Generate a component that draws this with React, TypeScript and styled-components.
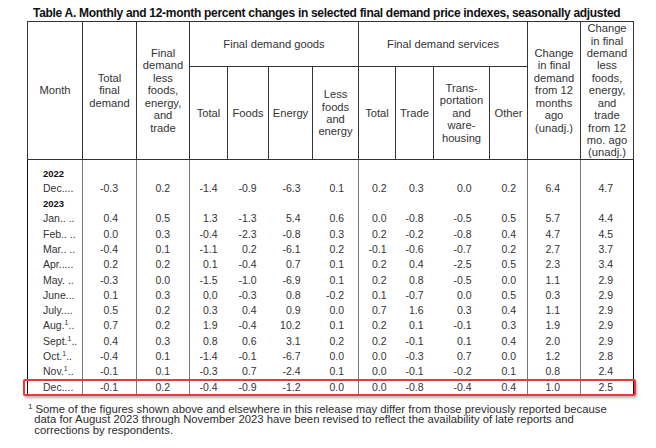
import React from 'react'
import styled, { createGlobalStyle } from 'styled-components';

const GlobalStyle = createGlobalStyle`
    html, body {
        margin: 0;
        padding: 0;
        background-color: #FFF;
    }
    body {
        font-family: "Liberation Sans", Arial, sans-serif;
        color: #2b2b2b;
    }
`;

const Page = styled.div`
    width: 656px;
    height: 448px;
    box-sizing: border-box;
    padding: 6px 0 0 27px;
    overflow: hidden;
`;

const Title = styled.h1`
    margin: 0 0 1px 6px;
    font-size: 12px;
    line-height: 14px;
    font-weight: 700;
    letter-spacing: -0.3px;
    color: #111;
    white-space: nowrap;
`;

const TableWrap = styled.div`
    position: relative;
    width: 607px;
`;

const Table = styled.table`
    border-collapse: collapse;
    table-layout: fixed;
    width: 607px;
    border-top: 1px solid #111;
    border-left: 1px solid #111;
    border-right: 1px solid #111;
    border-bottom: 1px solid #888;
`;

const HeadCell = styled.th<{ $h?: number }>`
    border: 1px solid #333;
    padding: 0;
    font-size: 11.2px;
    line-height: 12.4px;
    font-weight: 400;
    text-align: center;
    vertical-align: middle;
    color: #333;
    height: ${p => (p.$h ? `${p.$h}px` : 'auto')};
`;

const Row = styled.tr`
    height: 15.3px;
`;

const Spacer = styled.tr`
    height: 6px;
    td {
        padding: 0;
    }
`;

const Cell = styled.td<{ $pad: number; $divider?: boolean }>`
    padding: 0 ${p => p.$pad}px 0 0;
    font-size: 10.5px;
    line-height: 15.3px;
    text-align: right;
    white-space: nowrap;
    color: #333;
    border-left: ${p => (p.$divider ? '1px solid #777' : '0')};
`;

const MonthCell = styled.td<{ $year?: boolean }>`
    padding: 0 0 0 15px;
    font-size: ${p => (p.$year ? '9.5px' : '10.5px')};
    font-weight: ${p => (p.$year ? 700 : 400)};
    line-height: 15.3px;
    white-space: nowrap;
    overflow: hidden;
    color: ${p => (p.$year ? '#111' : '#333')};
`;

const Sup = styled.sup`
    font-size: 7px;
    line-height: 0;
    vertical-align: 4px;
`;

const Highlight = styled.div`
    position: absolute;
    left: -4px;
    right: -2px;
    bottom: 0;
    height: 17px;
    box-sizing: border-box;
    border: 2px solid #e8393f;
    border-radius: 2px;
    box-shadow: 1px 2px 3px rgba(0, 0, 0, 0.3);
    pointer-events: none;
`;

const Footnote = styled.p`
    margin: 8px 0 0 1px;
    font-size: 11.3px;
    line-height: 10.5px;
    color: #2b2b2b;
    white-space: nowrap;
`;

const FootSup = styled.sup`
    font-size: 8px;
    line-height: 0;
    vertical-align: 4px;
    margin-right: 3px;
`;

// widths and right padding for each column (month first)
const cols = [
    { w: 55, pad: 0, divider: false },
    { w: 54, pad: 18, divider: true },
    { w: 53, pad: 19, divider: true },
    { w: 38, pad: 10, divider: true },
    { w: 41, pad: 12, divider: false },
    { w: 44, pad: 12, divider: false },
    { w: 46, pad: 14, divider: false },
    { w: 37, pad: 9, divider: true },
    { w: 38, pad: 10, divider: false },
    { w: 56, pad: 18, divider: false },
    { w: 38, pad: 11, divider: false },
    { w: 53, pad: 20, divider: true },
    { w: 53, pad: 20, divider: true },
];

type DataRow = { year: string } | { month: React.ReactNode; values: string[] };

const note = <Sup>1</Sup>;

const rows: DataRow[] = [
    { year: '2022' },
    { month: 'Dec....', values: ['-0.3', '0.2', '-1.4', '-0.9', '-6.3', '0.1', '0.2', '0.3', '0.0', '0.2', '6.4', '4.7'] },
    { year: '2023' },
    { month: 'Jan.. ..', values: ['0.4', '0.5', '1.3', '-1.3', '5.4', '0.6', '0.0', '-0.8', '-0.5', '0.5', '5.7', '4.4'] },
    { month: 'Feb.. ..', values: ['0.0', '0.3', '-0.4', '-2.3', '-0.8', '0.3', '0.2', '-0.2', '-0.8', '0.4', '4.7', '4.5'] },
    { month: 'Mar.. ..', values: ['-0.4', '0.1', '-1.1', '0.2', '-6.1', '0.2', '-0.1', '-0.6', '-0.7', '0.2', '2.7', '3.7'] },
    { month: 'Apr.....', values: ['0.2', '0.2', '0.1', '-0.4', '0.7', '0.1', '0.2', '0.4', '-2.5', '0.5', '2.3', '3.4'] },
    { month: 'May. ..', values: ['-0.3', '0.0', '-1.5', '-1.0', '-6.9', '0.1', '0.2', '0.8', '-0.5', '0.0', '1.1', '2.9'] },
    { month: 'June...', values: ['0.1', '0.3', '0.0', '-0.3', '0.8', '-0.2', '0.1', '-0.7', '0.0', '0.5', '0.3', '2.9'] },
    { month: 'July....', values: ['0.5', '0.2', '0.3', '0.4', '0.9', '0.0', '0.7', '1.6', '0.3', '0.4', '1.1', '2.9'] },
    { month: <>Aug.{note}..</>, values: ['0.7', '0.2', '1.9', '-0.4', '10.2', '0.1', '0.2', '0.1', '-0.1', '0.3', '1.9', '2.9'] },
    { month: <>Sept.{note}..</>, values: ['0.4', '0.3', '0.8', '0.6', '3.1', '0.2', '0.2', '-0.1', '0.1', '0.4', '2.0', '2.9'] },
    { month: <>Oct.{note}..</>, values: ['-0.4', '0.1', '-1.4', '-0.1', '-6.7', '0.0', '0.0', '-0.3', '0.7', '0.0', '1.2', '2.8'] },
    { month: <>Nov.{note}..</>, values: ['-0.1', '0.1', '-0.3', '0.7', '-2.4', '0.1', '0.0', '-0.1', '-0.2', '0.1', '0.8', '2.4'] },
    { month: 'Dec....', values: ['-0.1', '0.2', '-0.4', '-0.9', '-1.2', '0.0', '0.0', '-0.8', '-0.4', '0.4', '1.0', '2.5'] },
];

const App = () => {
  return (
    <>
      <GlobalStyle />
      <Page>
        <Title>Table A. Monthly and 12-month percent changes in selected final demand price indexes, seasonally adjusted</Title>
        <TableWrap>
          <Table>
            <colgroup>
              {cols.map((c, i) => <col key={i} style={{ width: c.w }} />)}
            </colgroup>
            <thead>
              <tr>
                <HeadCell rowSpan={2}>Month</HeadCell>
                <HeadCell rowSpan={2}>Total<br />final<br />demand</HeadCell>
                <HeadCell rowSpan={2}>Final<br />demand<br />less<br />foods,<br />energy,<br />and<br />trade</HeadCell>
                <HeadCell colSpan={4} $h={44}>Final demand goods</HeadCell>
                <HeadCell colSpan={4}>Final demand services</HeadCell>
                <HeadCell rowSpan={2}>Change<br />in final<br />demand<br />from 12<br />months<br />ago<br />(unadj.)</HeadCell>
                <HeadCell rowSpan={2}>Change<br />in final<br />demand<br />less<br />foods,<br />energy,<br />and<br />trade<br />from 12<br />mo. ago<br />(unadj.)</HeadCell>
              </tr>
              <tr>
                <HeadCell $h={92}>Total</HeadCell>
                <HeadCell>Foods</HeadCell>
                <HeadCell>Energy</HeadCell>
                <HeadCell>Less<br />foods<br />and<br />energy</HeadCell>
                <HeadCell>Total</HeadCell>
                <HeadCell>Trade</HeadCell>
                <HeadCell>Trans-<br />portation<br />and<br />ware-<br />housing</HeadCell>
                <HeadCell>Other</HeadCell>
              </tr>
            </thead>
            <tbody>
              <Spacer>
                {cols.map((c, i) => <Cell key={i} $pad={0} $divider={c.divider} />)}
              </Spacer>
              {rows.map((r, i) => (
                <Row key={i}>
                  {'year' in r ? (
                    <>
                      <MonthCell $year>{r.year}</MonthCell>
                      {cols.slice(1).map((c, j) => <Cell key={j} $pad={c.pad} $divider={c.divider} />)}
                    </>
                  ) : (
                    <>
                      <MonthCell>{r.month}</MonthCell>
                      {r.values.map((v, j) => (
                        <Cell key={j} $pad={cols[j + 1].pad} $divider={cols[j + 1].divider}>{v}</Cell>
                      ))}
                    </>
                  )}
                </Row>
              ))}
            </tbody>
          </Table>
          <Highlight />
        </TableWrap>
        <Footnote>
          <FootSup>1</FootSup>Some of the figures shown above and elsewhere in this release may differ from those previously reported because<br />
          &nbsp;&nbsp;data for August 2023 through November 2023 have been revised to reflect the availability of late reports and<br />
          &nbsp;&nbsp;corrections by respondents.
        </Footnote>
      </Page>
    </>
  )
}

export default App;
